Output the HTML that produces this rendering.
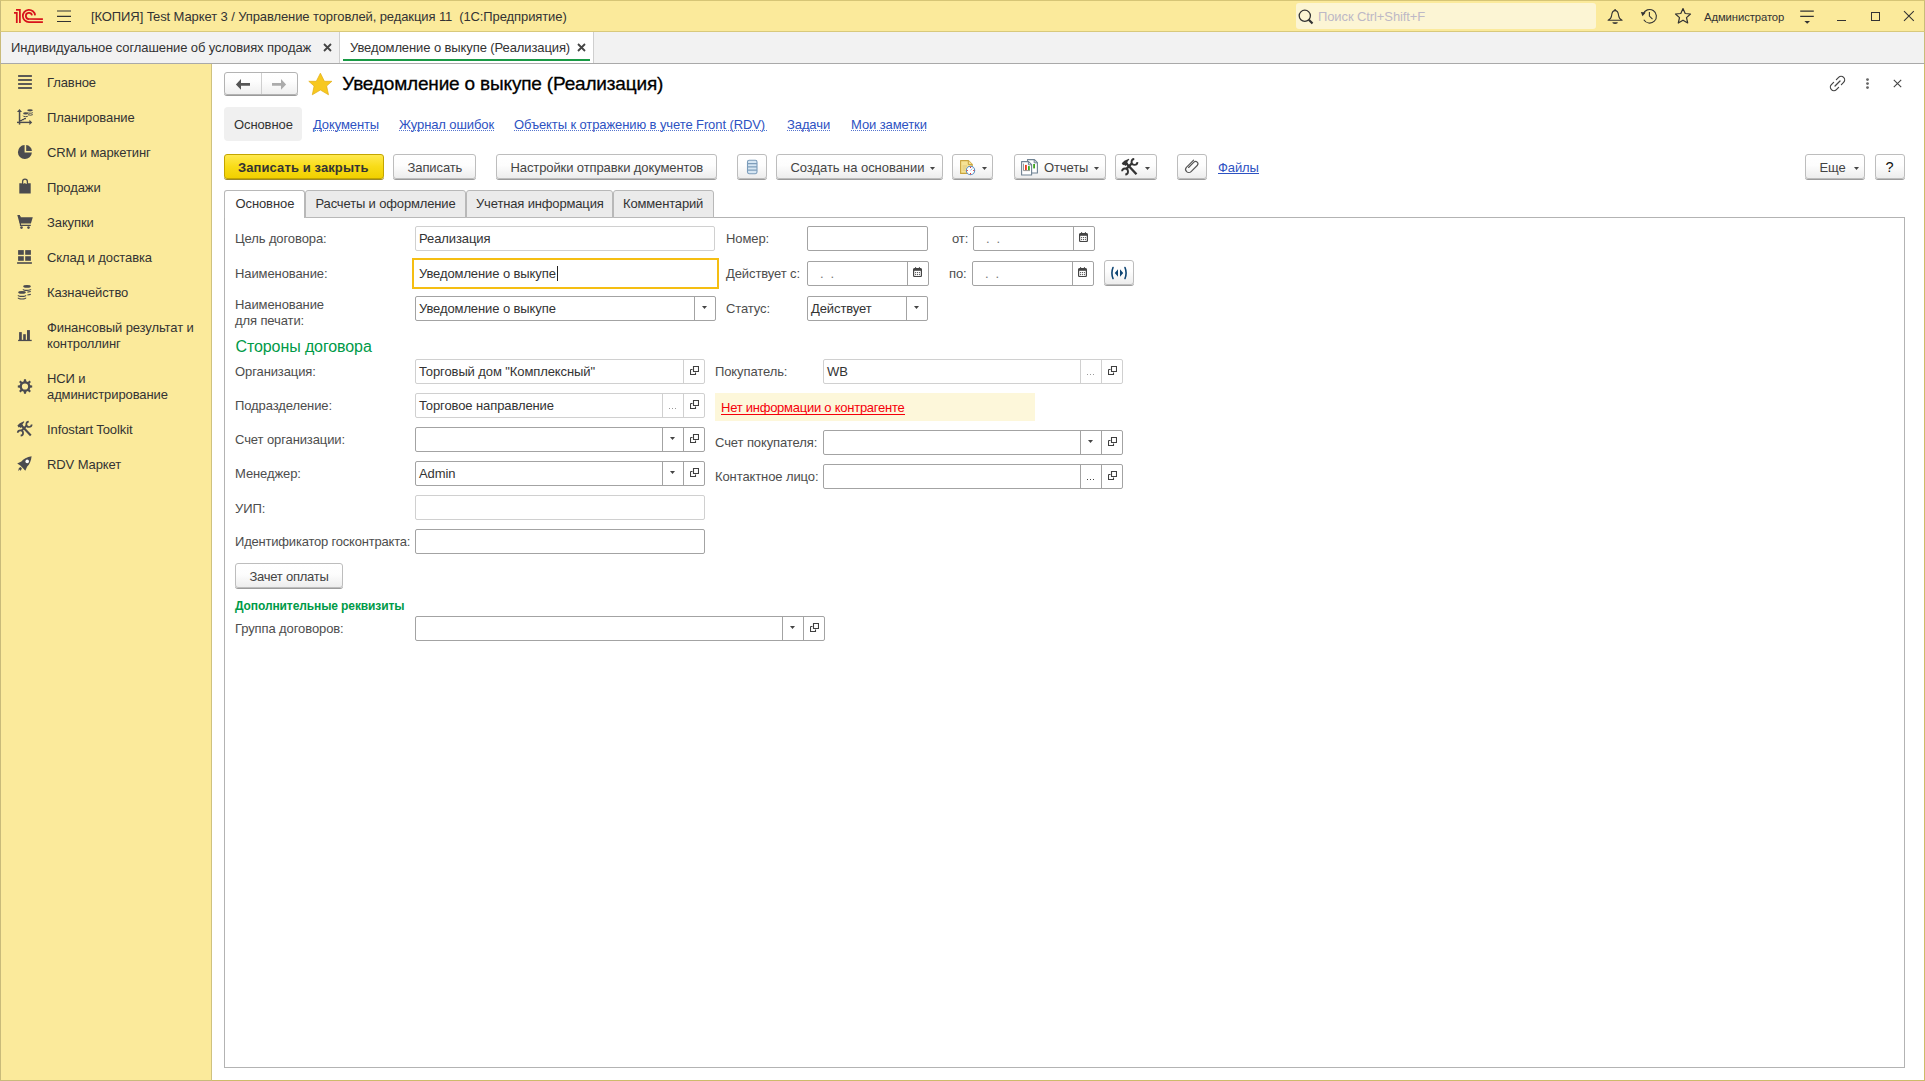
<!DOCTYPE html>
<html><head><meta charset="utf-8">
<style>
*{margin:0;padding:0;box-sizing:border-box}
html,body{width:1925px;height:1081px;overflow:hidden;background:#fff;font-family:"Liberation Sans",sans-serif;font-size:13px;color:#333}
.a{position:absolute}
.t{position:absolute;white-space:pre;line-height:15px;font-size:13px;letter-spacing:-0.1px}
#titlebar{left:0;top:0;width:1925px;height:32px;background:#FBEA9B;border-top:1px solid #D6C576;border-left:1px solid #C9BB7A;border-right:1px solid #C9BB7A;border-bottom:1px solid #D8C97C}
#tabbar{left:0;top:32px;width:1925px;height:32px;background:#F2F2F2;border-bottom:1px solid #A9A9A9;border-left:1px solid #C9BB7A;border-right:1px solid #C9BB7A}
#sidebar{left:0;top:64px;width:212px;height:1017px;background:#FBEA9B;border-right:1px solid #CFC27F;border-left:1px solid #C9BB7A;border-bottom:1px solid #C9BB7A}
#main{left:212px;top:64px;width:1713px;height:1017px;background:#fff;border-right:1px solid #CDBB6A;border-bottom:1px solid #CDBB6A}
.side{color:#333;left:47px}
.btn{position:absolute;height:26px;border:1px solid #B9B9B9;border-bottom-color:#9A9A9A;border-radius:3px;background:linear-gradient(#FFFFFF,#EFEFEF);box-shadow:0 1px 1px rgba(0,0,0,.18)}
.lnk{color:#3C5EC5;border-bottom:1px dotted #3C5EC5;line-height:13px}
.lbl{color:#4D4D4D}
.inp{position:absolute;height:25px;border:1px solid #A9A9A9;border-radius:3px;background:#fff}
.inp.lt{border-color:#D3D3D3}
.dv{position:absolute;top:0;bottom:0;width:1px;background:#C8C8C8}
.tri{position:absolute;width:0;height:0;border-left:3px solid transparent;border-right:3px solid transparent;border-top:3px solid #555}
.ptab{position:absolute;top:190px;height:28px;background:#EBEBEB;border:1px solid #B5B5B5;border-bottom:none;border-radius:3px 3px 0 0}
</style></head><body>

<div id="titlebar" class="a"></div>
<div id="tabbar" class="a"></div>
<div id="sidebar" class="a"></div>
<div id="main" class="a"></div>

<!-- title bar content -->
<svg class="a" style="left:0;top:0" width="50" height="30" viewBox="0 0 50 30">
 <g fill="none" stroke="#D7131B" stroke-width="1.75">
  <path d="M14 12.9 H16.8 V22.9"/>
  <path d="M16 9.85 H19.9 V22.9"/>
  <path d="M35.1 15.3 A6.15 6.15 0 1 0 29.05 22.1 H42.9"/>
  <path d="M32.0 15.3 A3.1 3.1 0 1 0 29.0 19.0 H42.9"/>
 </g>
</svg>
<svg class="a" style="left:57px;top:10px" width="15" height="13"><g stroke="#333" stroke-width="1.2"><path d="M0 1H14M0 6.3H14M0 11.5H14"/></g></svg>
<div class="t" style="left:91px;top:9px;color:#333">[КОПИЯ] Test Маркет 3 / Управление торговлей, редакция 11  (1С:Предприятие)</div>

<div class="a" style="left:1296px;top:3px;width:300px;height:26px;background:#FCF5D4;border-radius:3px"></div>
<svg class="a" style="left:1298px;top:9px" width="17" height="16"><circle cx="6.8" cy="6.8" r="5.6" fill="none" stroke="#333" stroke-width="1.3"/><path d="M10.8 10.8 L14.5 14.5" stroke="#333" stroke-width="2.2"/></svg>
<div class="t" style="left:1318px;top:9px;color:#BDB8C6">Поиск Ctrl+Shift+F</div>

<!-- bell -->
<svg class="a" style="left:1606px;top:8px" width="18" height="18" viewBox="0 0 18 18"><circle cx="9.1" cy="1.9" r="0.9" fill="#333"/><path d="M9.1 2.6 C6.3 2.6 5.9 4.6 5.6 7.5 C5.3 10.2 4.6 11.2 2.1 12.2 H16.1 C13.6 11.2 12.9 10.2 12.6 7.5 C12.3 4.6 11.9 2.6 9.1 2.6 Z" fill="none" stroke="#333" stroke-width="1.1" stroke-linejoin="round"/><path d="M6.3 14.3 A2.8 1.7 0 0 0 11.9 14.3 Z" fill="#333"/></svg>
<!-- history -->
<svg class="a" style="left:1640px;top:8px" width="18" height="18" viewBox="0 0 18 18"><path d="M3.17 6.09 A6.8 6.8 0 1 1 3.77 11.8" fill="none" stroke="#333" stroke-width="1.1"/><path d="M0.9 4.1 L5.7 4.6 L2.5 8.3 Z" fill="#333"/><path d="M9.4 4.1 V8.1 L12.5 11.2" fill="none" stroke="#333" stroke-width="1.1"/></svg>
<!-- star outline -->
<svg class="a" style="left:1674px;top:7px" width="18" height="18" viewBox="0 0 18 18"><path d="M9 1.5 L11.2 6.5 L16.5 7 L12.5 10.6 L13.7 16 L9 13.2 L4.3 16 L5.5 10.6 L1.5 7 L6.8 6.5Z" fill="none" stroke="#333" stroke-width="1.2" stroke-linejoin="round"/></svg>
<div class="t" style="left:1704px;top:9.5px;font-size:11.3px;color:#333">Администратор</div>
<svg class="a" style="left:1799px;top:9px" width="16" height="16"><path d="M1.2 2.1H14.8M1.2 7.4H14.8" stroke="#333" stroke-width="1.1"/><path d="M5.4 11.9H11L8.2 14.7Z" fill="#333"/></svg>
<div class="a" style="left:1837px;top:19.8px;width:9.2px;height:1.2px;background:#333"></div>
<div class="a" style="left:1871px;top:12px;width:9px;height:9px;border:1.3px solid #333"></div>
<svg class="a" style="left:1903px;top:10px" width="12" height="12"><path d="M1 1.1L10.8 10.9M10.8 1.1L1 10.9" stroke="#333" stroke-width="1.05"/></svg>

<!-- open tabs -->
<div class="t" style="left:11px;top:40px;color:#333">Индивидуальное соглашение об условиях продаж</div>
<svg class="a" style="left:323px;top:43px" width="9" height="9"><path d="M1 1L8 8M8 1L1 8" stroke="#444" stroke-width="1.8"/></svg>
<div class="a" style="left:339px;top:32px;width:1px;height:31px;background:#CFCFCF"></div>
<div class="a" style="left:340px;top:32px;width:253px;height:31px;background:#fff"></div>
<div class="a" style="left:593px;top:32px;width:1px;height:31px;background:#CFCFCF"></div>
<div class="a" style="left:343px;top:59px;width:247px;height:2px;background:#199A45"></div>
<div class="t" style="left:350px;top:40px;color:#333;letter-spacing:-0.1px">Уведомление о выкупе (Реализация)</div>
<svg class="a" style="left:577px;top:43px" width="9" height="9"><path d="M1 1L8 8M8 1L1 8" stroke="#444" stroke-width="1.8"/></svg>

<!-- sidebar -->
<svg class="a" style="left:0;top:64px" width="40" height="420" viewBox="0 64 40 420">
 <g fill="#4B4B4F" stroke="none">
  <!-- Главное -->
  <rect x="18.1" y="75.1" width="13.8" height="1.8"/><rect x="18.1" y="79.1" width="13.8" height="1.8"/><rect x="18.1" y="83.1" width="13.8" height="1.8"/><rect x="18.1" y="87.1" width="13.8" height="1.8"/>
  <!-- Планирование -->
  <path d="M19.5 109 L22 112 H17 Z"/><rect x="18.8" y="111" width="1.5" height="13.6"/>
  <rect x="17" y="121.7" width="13" height="1.4"/><path d="M32.2 122.4 L29.4 119.8 V125 Z"/>
  <path d="M19.8 120.6 H21.4 L22.4 119.6 H23.4 L24.4 118.6 H26" fill="none" stroke="#4B4B4F" stroke-width="1.1"/>
  <ellipse cx="25.6" cy="113.4" rx="2.5" ry="1.1"/><path d="M23.1 115.7 A2.5 1 0 0 0 28.1 115.7" fill="none" stroke="#4B4B4F" stroke-width="1"/>
  <ellipse cx="30" cy="110.3" rx="2.8" ry="1.1"/><path d="M27.6 112.6 A2.8 1 0 0 0 32.8 112.6 M28.1 114.6 A2.8 1 0 0 0 32.8 114.6" fill="none" stroke="#4B4B4F" stroke-width="1"/>
  <!-- CRM -->
  <path d="M24.6 152.6 V145.1 A7 7 0 1 0 31.9 152.6 Z"/>
  <path d="M26.2 150.9 V145.1 A6 6 0 0 1 31.9 150.9 Z"/>
  <!-- Продажи -->
  <path d="M19.3 183.2 H21.6 A1.3 1.3 0 0 0 24 183.2 H25.3 A1.3 1.3 0 0 0 27.7 183.2 H30.7 V193.6 H19.3 Z"/>
  <path d="M22.6 184.6 V181.6 A2.4 2.4 0 0 1 27.4 181.6 V184.6" fill="none" stroke="#4B4B4F" stroke-width="1.3"/>
  <!-- Закупки -->
  <path d="M17.3 215 H19.9 L20.2 217.2 H32.8 L30.9 223.6 H19.6 Z"/>
  <path d="M19.9 216 L20.5 225.4 H30.8" fill="none" stroke="#4B4B4F" stroke-width="1.2"/>
  <circle cx="21.5" cy="227.6" r="1.3"/><circle cx="28.5" cy="227.6" r="1.3"/>
  <!-- Склад -->
  <rect x="18.1" y="250.1" width="5.7" height="4.7"/><rect x="25.2" y="250.1" width="5.7" height="4.7"/>
  <rect x="18.1" y="256.2" width="5.7" height="4.6"/><rect x="25.2" y="256.2" width="5.7" height="4.6"/>
  <rect x="17.1" y="262.2" width="14.8" height="1.6"/>
  <!-- Казначейство -->
  <ellipse cx="27" cy="286.4" rx="3.8" ry="1.3"/>
  <path d="M23.2 289.2 A3.8 1.2 0 0 0 30.8 289.2" fill="none" stroke="#4B4B4F" stroke-width="1.2"/>
  <path d="M27.4 292.1 L30.8 291.5 M27.4 295 L30.8 294.3" fill="none" stroke="#4B4B4F" stroke-width="1.2"/>
  <ellipse cx="22" cy="292.4" rx="3.8" ry="1.3"/>
  <path d="M18.2 295.2 A3.8 1.2 0 0 0 25.8 295.2 M18.2 297.8 A3.8 1.2 0 0 0 25.8 297.8" fill="none" stroke="#4B4B4F" stroke-width="1.2"/>
  <!-- Финансовый -->
  <rect x="19.1" y="332.1" width="2.7" height="8"/><rect x="23.2" y="334.2" width="2.6" height="6"/><rect x="27" y="330.1" width="2.9" height="10"/>
  <rect x="18.1" y="339.8" width="13.6" height="1.3"/>
  <!-- НСИ gear -->
  <path fill-rule="evenodd" d="M24 379.2 H26 L26.3 381.2 L27.9 381.9 L29.5 380.6 L30.9 382 L29.6 383.6 L30.3 385.2 L32.2 385.5 V387.5 L30.3 387.8 L29.6 389.4 L30.9 391 L29.5 392.4 L27.9 391.1 L26.3 391.8 L26 393.8 H24 L23.7 391.8 L22.1 391.1 L20.5 392.4 L19.1 391 L20.4 389.4 L19.7 387.8 L17.8 387.5 V385.5 L19.7 385.2 L20.4 383.6 L19.1 382 L20.5 380.6 L22.1 381.9 L23.7 381.2 Z M25 383.4 A3.1 3.1 0 1 0 25 389.6 A3.1 3.1 0 1 0 25 383.4 Z"/>
  <!-- Infostart tools -->
  <g transform="translate(14 418)"><path d="M7.2 7.2 L16.8 17.5" stroke="#4B4B4F" stroke-width="2.1" fill="none"/><path d="M3.4 7.6 L5.8 5.2 L9.9 3.3 L10.3 3.9 L8.3 6.6 L9.1 7.5 L6.8 9.9 L5.5 8.9 L4.6 9.4 Z" fill="#4B4B4F"/><path d="M12.6 7.6 L7.6 12.6" stroke="#4B4B4F" stroke-width="2" fill="none"/><path d="M17.69 6.54 A2.7 2.7 0 1 1 14.76 3.61" stroke="#4B4B4F" stroke-width="1.7" fill="none"/><path d="M3.71 14.76 A2.7 2.7 0 1 1 6.64 17.69" stroke="#4B4B4F" stroke-width="1.7" fill="none"/></g>
  <!-- RDV rocket -->
  <path d="M31.6 456.2 C27 457 23.2 459 21.4 461.4 L17.2 463.5 L20.3 465.6 L23 468.3 L25.3 470.8 L27.2 466.6 C29.6 464.4 31.1 460.5 31.6 456.2 Z"/>
  <circle cx="27.2" cy="461.4" r="1.8" fill="#fff"/>
  <path d="M18.2 471 L18.9 468 L20.7 467 L21.9 468.4 L20.6 470.9 L19.9 469.4 Z"/>
 </g>
</svg>
<div class="t side" style="top:75px">Главное</div>
<div class="t side" style="top:110px">Планирование</div>
<div class="t side" style="top:145px">CRM и маркетинг</div>
<div class="t side" style="top:180px">Продажи</div>
<div class="t side" style="top:215px">Закупки</div>
<div class="t side" style="top:250px">Склад и доставка</div>
<div class="t side" style="top:285px">Казначейство</div>
<div class="t side" style="top:319.5px;line-height:16px">Финансовый результат и
контроллинг</div>
<div class="t side" style="top:370.5px;line-height:16px">НСИ и
администрирование</div>
<div class="t side" style="top:421.5px">Infostart Toolkit</div>
<div class="t side" style="top:456.5px">RDV Маркет</div>

<!-- MAIN -->
<div class="a" style="left:224px;top:72px;width:74px;height:23px;border:1px solid #B3B3B3;border-radius:3px;background:linear-gradient(#FFFFFF 0%,#FDFDFD 40%,#EFEFEF 100%);box-shadow:0 1px 0 #9A9A9A"></div>
<div class="a" style="left:261px;top:73px;width:1px;height:21px;background:#CFCFCF"></div>
<svg class="a" style="left:235px;top:78px" width="16" height="13" viewBox="0 0 16 13"><path d="M0.9 6.4 L6 1.1 V5 H15 V7.8 H6 V11.7 Z" fill="#555"/></svg>
<svg class="a" style="left:271px;top:78px" width="16" height="13" viewBox="0 0 16 13"><path d="M15.1 6.4 L10 1.1 V5 H1 V7.8 H10 V11.7 Z" fill="#ABABAB"/></svg>
<svg class="a" style="left:308px;top:72px" width="25" height="24" viewBox="0 0 25 24"><path d="M12.4 1.2 L16.4 9.3 L23.9 9.3 L18.6 14 L20.5 22.8 L12.4 18 L4.3 22.8 L6.1 14 L0.8 9.3 L8.3 9.3 Z" fill="#F7C81F" stroke="#E3AE12" stroke-width="0.7" stroke-linejoin="round"/></svg>
<div class="t" style="left:342.3px;top:73.42px;font-size:19px;line-height:22px;color:#000;letter-spacing:-0.17px;-webkit-text-stroke:0.3px #000">Уведомление о выкупе (Реализация)</div>
<svg class="a" style="left:1829px;top:75px" width="17" height="17" viewBox="0 0 17 17"><g fill="none" stroke="#444" stroke-width="1.2" stroke-linecap="round"><path d="M7.4 4.6 L9.6 2.4 A2.6 2.6 0 0 1 14.6 7.4 L12.4 9.6"/><path d="M9.6 12.4 L7.4 14.6 A2.6 2.6 0 0 1 2.4 9.6 L4.6 7.4"/><path d="M6 11 L11 6"/></g></svg>
<svg class="a" style="left:1865px;top:78px" width="5" height="12" viewBox="0 0 5 12"><g fill="#666"><circle cx="2.5" cy="1.6" r="1.4"/><circle cx="2.5" cy="5.6" r="1.4"/><circle cx="2.5" cy="9.6" r="1.4"/></g></svg>
<svg class="a" style="left:1893px;top:79px" width="9" height="9" viewBox="0 0 9 9"><path d="M0.8 0.8L8.2 8.2M8.2 0.8L0.8 8.2" stroke="#444" stroke-width="1.1"/></svg>
<div class="a" style="left:224px;top:107px;width:78px;height:34px;background:#F0F0F0;border-radius:4px"></div>
<div class="t" style="left:234px;top:117.00px;font-size:13px;line-height:15px;color:#333">Основное</div>
<div class="t" style="left:313px;top:117.00px;font-size:13px;line-height:15px;color:#2D52C2">Документы</div>
<div class="a" style="left:313px;top:130px;width:65.5px;height:1px;background:repeating-linear-gradient(90deg,#5574CE 0 1px,transparent 1px 2px)"></div>
<div class="t" style="left:399px;top:117.00px;font-size:13px;line-height:15px;color:#2D52C2">Журнал ошибок</div>
<div class="a" style="left:399px;top:130px;width:95px;height:1px;background:repeating-linear-gradient(90deg,#5574CE 0 1px,transparent 1px 2px)"></div>
<div class="t" style="left:514px;top:117.00px;font-size:13px;line-height:15px;color:#2D52C2">Объекты к отражению в учете Front (RDV)</div>
<div class="a" style="left:514px;top:130px;width:253px;height:1px;background:repeating-linear-gradient(90deg,#5574CE 0 1px,transparent 1px 2px)"></div>
<div class="t" style="left:787px;top:117.00px;font-size:13px;line-height:15px;color:#2D52C2">Задачи</div>
<div class="a" style="left:787px;top:130px;width:43px;height:1px;background:repeating-linear-gradient(90deg,#5574CE 0 1px,transparent 1px 2px)"></div>
<div class="t" style="left:851px;top:117.00px;font-size:13px;line-height:15px;color:#2D52C2">Мои заметки</div>
<div class="a" style="left:851px;top:130px;width:75.5px;height:1px;background:repeating-linear-gradient(90deg,#5574CE 0 1px,transparent 1px 2px)"></div>
<div class="a" style="left:224px;top:154px;width:160px;height:25px;border:1px solid #C3A500;border-radius:3px;background:linear-gradient(#FFE94F 0%,#F8DC18 50%,#F1D000 100%);box-shadow:0 1px 0 #9C8A2A"></div>
<div class="t" style="left:238px;top:160.00px;font-size:13px;line-height:15px;color:#333;font-weight:bold;letter-spacing:0.1px">Записать и закрыть</div>
<div class="a" style="left:393px;top:154px;width:83px;height:25px;border:1px solid #BDBDBD;border-radius:3px;background:linear-gradient(#FFFFFF 0%,#FDFDFD 45%,#EDEDED 100%);box-shadow:0 1px 0 #9C9C9C"></div>
<div class="t" style="left:407.5px;top:160.00px;font-size:13px;line-height:15px;color:#444">Записать</div>
<div class="a" style="left:496px;top:154px;width:221px;height:25px;border:1px solid #BDBDBD;border-radius:3px;background:linear-gradient(#FFFFFF 0%,#FDFDFD 45%,#EDEDED 100%);box-shadow:0 1px 0 #9C9C9C"></div>
<div class="t" style="left:510.5px;top:160.00px;font-size:13px;line-height:15px;color:#444;letter-spacing:-0.1px">Настройки отправки документов</div>
<div class="a" style="left:737px;top:154px;width:30px;height:25px;border:1px solid #BDBDBD;border-radius:3px;background:linear-gradient(#FFFFFF 0%,#FDFDFD 45%,#EDEDED 100%);box-shadow:0 1px 0 #9C9C9C"></div>
<svg class="a" style="left:746px;top:159px" width="12" height="16" viewBox="0 0 12 16"><rect x="1.5" y="1.3" width="9.5" height="13.4" rx="1.6" fill="#D6E6F3" stroke="#7B9CBA" stroke-width="1.1"/><g stroke="#7E9DBA" stroke-width="1.2"><path d="M1.5 4.6H11M1.5 7.9H11M1.5 11.2H11"/></g></svg>
<div class="a" style="left:776px;top:154px;width:167px;height:25px;border:1px solid #BDBDBD;border-radius:3px;background:linear-gradient(#FFFFFF 0%,#FDFDFD 45%,#EDEDED 100%);box-shadow:0 1px 0 #9C9C9C"></div>
<div class="t" style="left:790.5px;top:160.00px;font-size:13px;line-height:15px;color:#444;letter-spacing:-0.05px">Создать на основании</div>
<svg class="a" style="left:930.0px;top:166.5px" width="5" height="3" viewBox="0 0 5 3"><path d="M0 0H5L2.5 3Z" fill="#444"/></svg>
<div class="a" style="left:952px;top:154px;width:41px;height:25px;border:1px solid #BDBDBD;border-radius:3px;background:linear-gradient(#FFFFFF 0%,#FDFDFD 45%,#EDEDED 100%);box-shadow:0 1px 0 #9C9C9C"></div>
<svg class="a" style="left:959px;top:159px" width="18" height="17" viewBox="0 0 18 17"><path d="M1.6 1.6 H9.5 L13.2 5.3 V14.4 H1.6 Z" fill="#F6E394" stroke="#C9A43E" stroke-width="1.1" stroke-linejoin="round"/><path d="M9.3 1.6 V5.5 H13.2" fill="#F6E394" stroke="#C9A43E" stroke-width="1"/><g stroke="#D9C47A" stroke-width="0.9"><path d="M3.5 7H8M3.5 9H7M3.5 11H6"/></g><circle cx="11.5" cy="11.5" r="4.2" fill="#fff" stroke="#5A8CC0" stroke-width="1.1"/><g fill="#E01010"><circle cx="11.5" cy="8.3" r="0.6"/><circle cx="11.5" cy="14.7" r="0.6"/><circle cx="8.3" cy="11.5" r="0.6"/><circle cx="14.7" cy="11.5" r="0.6"/></g><path d="M11.5 11.5 L13.2 9.6" stroke="#8FB0DA" stroke-width="0.9"/></svg>
<svg class="a" style="left:981.5px;top:166.5px" width="5" height="3" viewBox="0 0 5 3"><path d="M0 0H5L2.5 3Z" fill="#444"/></svg>
<div class="a" style="left:1014px;top:154px;width:92px;height:25px;border:1px solid #BDBDBD;border-radius:3px;background:linear-gradient(#FFFFFF 0%,#FDFDFD 45%,#EDEDED 100%);box-shadow:0 1px 0 #9C9C9C"></div>
<svg class="a" style="left:1020px;top:158px" width="19" height="18" viewBox="0 0 19 18"><path d="M7.5 1.6 H14.4 L17.4 4.6 V15 H7.5 Z" fill="#fff" stroke="#6F8293" stroke-width="1.1" stroke-linejoin="round"/><path d="M14.2 1.6V4.8H17.4" fill="none" stroke="#6F8293" stroke-width="1"/><path d="M1.6 3.6 H8.6 L11.6 6.6 V17 H1.6 Z" fill="#fff" stroke="#6F8293" stroke-width="1.1" stroke-linejoin="round"/><path d="M8.4 3.6V6.8H11.6" fill="none" stroke="#6F8293" stroke-width="1"/><path d="M3.5 5.6V12.6H10" fill="none" stroke="#8A8A8A" stroke-width="0.9"/><rect x="5" y="6.9" width="1.8" height="5.2" fill="#E83A1E"/><rect x="8" y="8.1" width="1.8" height="4" fill="#3EA31C"/><rect x="13.2" y="6" width="1.8" height="4.4" fill="#3EA31C"/></svg>
<div class="t" style="left:1044px;top:160.00px;font-size:13px;line-height:15px;color:#444">Отчеты</div>
<svg class="a" style="left:1093.5px;top:166.5px" width="5" height="3" viewBox="0 0 5 3"><path d="M0 0H5L2.5 3Z" fill="#444"/></svg>
<div class="a" style="left:1115px;top:154px;width:42px;height:25px;border:1px solid #BDBDBD;border-radius:3px;background:linear-gradient(#FFFFFF 0%,#FDFDFD 45%,#EDEDED 100%);box-shadow:0 1px 0 #9C9C9C"></div>
<svg class="a" style="left:1118px;top:155px" width="25" height="25" viewBox="0 0 25 25"><g transform="scale(1.1)"><path d="M7.2 7.2 L16.8 17.5" stroke="#333" stroke-width="2.1" fill="none"/><path d="M3.4 7.6 L5.8 5.2 L9.9 3.3 L10.3 3.9 L8.3 6.6 L9.1 7.5 L6.8 9.9 L5.5 8.9 L4.6 9.4 Z" fill="#333"/><path d="M12.6 7.6 L7.6 12.6" stroke="#333" stroke-width="2" fill="none"/><path d="M17.69 6.54 A2.7 2.7 0 1 1 14.76 3.61" stroke="#333" stroke-width="1.7" fill="none"/><path d="M3.71 14.76 A2.7 2.7 0 1 1 6.64 17.69" stroke="#333" stroke-width="1.7" fill="none"/></g></svg>
<svg class="a" style="left:1144.5px;top:166.5px" width="5" height="3" viewBox="0 0 5 3"><path d="M0 0H5L2.5 3Z" fill="#444"/></svg>
<div class="a" style="left:1177px;top:154px;width:30px;height:25px;border:1px solid #BDBDBD;border-radius:3px;background:linear-gradient(#FFFFFF 0%,#FDFDFD 45%,#EDEDED 100%);box-shadow:0 1px 0 #9C9C9C"></div>
<svg class="a" style="left:1180px;top:155px" width="25" height="25" viewBox="0 0 25 25"><path d="M13.6 5.1 L6.6 12.1 A3.18 3.18 0 0 0 11.1 16.6 L17.2 10.5 A2.33 2.33 0 0 0 13.9 7.2 L8.6 12.5" fill="none" stroke="#555" stroke-width="1.15" stroke-linecap="round"/></svg>
<div class="t" style="left:1218px;top:160.00px;font-size:13px;line-height:15px;color:#2D52C2">Файлы</div>
<div class="a" style="left:1218px;top:173px;width:41px;height:1px;background:#2D52C2"></div>
<div class="a" style="left:1805px;top:154px;width:60px;height:25px;border:1px solid #BDBDBD;border-radius:3px;background:linear-gradient(#FFFFFF 0%,#FDFDFD 45%,#EDEDED 100%);box-shadow:0 1px 0 #9C9C9C"></div>
<div class="t" style="left:1819.5px;top:160.00px;font-size:13px;line-height:15px;color:#444">Еще</div>
<svg class="a" style="left:1853.5px;top:166.5px" width="5" height="3" viewBox="0 0 5 3"><path d="M0 0H5L2.5 3Z" fill="#444"/></svg>
<div class="a" style="left:1875px;top:154px;width:30px;height:25px;border:1px solid #BDBDBD;border-radius:3px;background:linear-gradient(#FFFFFF 0%,#FDFDFD 45%,#EDEDED 100%);box-shadow:0 1px 0 #9C9C9C"></div>
<div class="t" style="left:1885.5px;top:159.98px;font-size:14.5px;line-height:15px;color:#111">?</div>
<div class="a" style="left:224px;top:217px;width:1681px;height:851px;border:1px solid #B3B3B3;border-top-color:#B3B3B3;background:#fff"></div>
<div class="a" style="left:304.5px;top:190px;width:161.0px;height:28px;background:#EBEBEB;border:1px solid #B8B8B8;border-radius:3px 3px 0 0"></div>
<div class="t" style="left:315.5px;top:195.60px;font-size:13px;line-height:15px;color:#333;letter-spacing:-0.15px">Расчеты и оформление</div>
<div class="a" style="left:465.5px;top:190px;width:147.0px;height:28px;background:#EBEBEB;border:1px solid #B8B8B8;border-radius:3px 3px 0 0"></div>
<div class="t" style="left:476px;top:195.60px;font-size:13px;line-height:15px;color:#333;letter-spacing:-0.15px">Учетная информация</div>
<div class="a" style="left:612.5px;top:190px;width:101.5px;height:28px;background:#EBEBEB;border:1px solid #B8B8B8;border-radius:3px 3px 0 0"></div>
<div class="t" style="left:623px;top:195.60px;font-size:13px;line-height:15px;color:#333;letter-spacing:-0.15px">Комментарий</div>
<div class="a" style="left:224px;top:190px;width:81px;height:28px;background:#fff;border:1px solid #B8B8B8;border-bottom:none;border-radius:3px 3px 0 0"></div>
<div class="t" style="left:235.5px;top:195.60px;font-size:13px;line-height:15px;color:#333">Основное</div>
<div class="t" style="left:235px;top:231.00px;font-size:13px;line-height:15px;color:#4D4D4D">Цель договора:</div>
<div class="a" style="left:415px;top:226px;width:300px;height:25px;border:1px solid #D0D0D0;border-radius:2px;background:#fff"></div>
<div class="t" style="left:419px;top:231.20px;font-size:13px;line-height:15px;color:#333">Реализация</div>
<div class="t" style="left:726px;top:231.00px;font-size:13px;line-height:15px;color:#4D4D4D">Номер:</div>
<div class="a" style="left:807px;top:226px;width:121px;height:25px;border:1px solid #A3A3A3;border-radius:2px;background:#fff"></div>
<div class="t" style="left:952px;top:231.00px;font-size:13px;line-height:15px;color:#4D4D4D">от:</div>
<div class="a" style="left:973px;top:226px;width:122px;height:25px;border:1px solid #A3A3A3;border-radius:2px;background:#fff"></div>
<div class="a" style="left:1073px;top:227px;width:1px;height:23px;background:#A3A3A3"></div>
<svg class="a" style="left:1078.8px;top:232.2px" width="9" height="10" viewBox="0 0 9 10"><rect x="0.6" y="1.6" width="7.8" height="8" rx="1" fill="#fff" stroke="#444" stroke-width="1.2"/><rect x="0.6" y="1.6" width="7.8" height="2.2" fill="#444"/><g fill="#444"><circle cx="2.6" cy="5.6" r="0.6"/><circle cx="4.5" cy="5.6" r="0.6"/><circle cx="6.4" cy="5.6" r="0.6"/><circle cx="2.6" cy="7.6" r="0.6"/><circle cx="4.5" cy="7.6" r="0.6"/><circle cx="6.4" cy="7.6" r="0.6"/></g><rect x="2" y="0.2" width="1.1" height="1.6" fill="#444"/><rect x="5.9" y="0.2" width="1.1" height="1.6" fill="#444"/></svg>
<div class="t" style="left:986px;top:231.00px;font-size:13px;line-height:15px;color:#777">.  .</div>
<div class="t" style="left:235px;top:266.00px;font-size:13px;line-height:15px;color:#4D4D4D">Наименование:</div>
<div class="a" style="left:412px;top:258px;width:307px;height:31px;border:2px solid #F5BE12;background:#fff"></div>
<div class="t" style="left:419px;top:266.00px;font-size:13px;line-height:15px;color:#333">Уведомление о выкупе</div>
<div class="a" style="left:557px;top:266px;width:1px;height:15px;background:#222"></div>
<div class="t" style="left:726px;top:266.00px;font-size:13px;line-height:15px;color:#4D4D4D">Действует с:</div>
<div class="a" style="left:807px;top:261px;width:122px;height:25px;border:1px solid #A3A3A3;border-radius:2px;background:#fff"></div>
<div class="a" style="left:907px;top:262px;width:1px;height:23px;background:#A3A3A3"></div>
<svg class="a" style="left:912.8px;top:267.2px" width="9" height="10" viewBox="0 0 9 10"><rect x="0.6" y="1.6" width="7.8" height="8" rx="1" fill="#fff" stroke="#444" stroke-width="1.2"/><rect x="0.6" y="1.6" width="7.8" height="2.2" fill="#444"/><g fill="#444"><circle cx="2.6" cy="5.6" r="0.6"/><circle cx="4.5" cy="5.6" r="0.6"/><circle cx="6.4" cy="5.6" r="0.6"/><circle cx="2.6" cy="7.6" r="0.6"/><circle cx="4.5" cy="7.6" r="0.6"/><circle cx="6.4" cy="7.6" r="0.6"/></g><rect x="2" y="0.2" width="1.1" height="1.6" fill="#444"/><rect x="5.9" y="0.2" width="1.1" height="1.6" fill="#444"/></svg>
<div class="t" style="left:820px;top:266.00px;font-size:13px;line-height:15px;color:#777">.  .</div>
<div class="t" style="left:949px;top:266.00px;font-size:13px;line-height:15px;color:#4D4D4D">по:</div>
<div class="a" style="left:972px;top:261px;width:122px;height:25px;border:1px solid #A3A3A3;border-radius:2px;background:#fff"></div>
<div class="a" style="left:1072px;top:262px;width:1px;height:23px;background:#A3A3A3"></div>
<svg class="a" style="left:1077.8px;top:267.2px" width="9" height="10" viewBox="0 0 9 10"><rect x="0.6" y="1.6" width="7.8" height="8" rx="1" fill="#fff" stroke="#444" stroke-width="1.2"/><rect x="0.6" y="1.6" width="7.8" height="2.2" fill="#444"/><g fill="#444"><circle cx="2.6" cy="5.6" r="0.6"/><circle cx="4.5" cy="5.6" r="0.6"/><circle cx="6.4" cy="5.6" r="0.6"/><circle cx="2.6" cy="7.6" r="0.6"/><circle cx="4.5" cy="7.6" r="0.6"/><circle cx="6.4" cy="7.6" r="0.6"/></g><rect x="2" y="0.2" width="1.1" height="1.6" fill="#444"/><rect x="5.9" y="0.2" width="1.1" height="1.6" fill="#444"/></svg>
<div class="t" style="left:985px;top:266.00px;font-size:13px;line-height:15px;color:#777">.  .</div>
<div class="a" style="left:1104px;top:260px;width:30px;height:25px;border:1px solid #BDBDBD;border-radius:3px;background:linear-gradient(#FFFFFF 0%,#FDFDFD 45%,#EDEDED 100%);box-shadow:0 1px 0 #9C9C9C"></div>
<svg class="a" style="left:1110px;top:266px" width="18" height="14" viewBox="0 0 18 14"><g fill="none" stroke="#0E4573" stroke-width="1.6" stroke-linecap="round"><path d="M3 1.5 Q0.8 7 3 12.5"/><path d="M15 1.5 Q17.2 7 15 12.5"/></g><path d="M8 3.2 L4.8 7 L8 10.8Z M10 3.2 L13.2 7 L10 10.8Z" fill="#0E4573"/></svg>
<div class="t" style="left:235px;top:297.20px;font-size:13px;line-height:15px;color:#4D4D4D">Наименование</div>
<div class="t" style="left:235px;top:313.00px;font-size:13px;line-height:15px;color:#4D4D4D">для печати:</div>
<div class="a" style="left:415px;top:296px;width:301px;height:25px;border:1px solid #A3A3A3;border-radius:2px;background:#fff"></div>
<div class="t" style="left:419px;top:301.20px;font-size:13px;line-height:15px;color:#333">Уведомление о выкупе</div>
<div class="a" style="left:694px;top:297px;width:1px;height:23px;background:#A3A3A3"></div>
<svg class="a" style="left:702.0px;top:306.1px" width="5" height="3" viewBox="0 0 5 3"><path d="M0 0H5L2.5 3Z" fill="#444"/></svg>
<div class="t" style="left:726px;top:301.30px;font-size:13px;line-height:15px;color:#4D4D4D">Статус:</div>
<div class="a" style="left:807px;top:296px;width:121px;height:25px;border:1px solid #A3A3A3;border-radius:2px;background:#fff"></div>
<div class="t" style="left:811px;top:301.20px;font-size:13px;line-height:15px;color:#333">Действует</div>
<div class="a" style="left:906px;top:297px;width:1px;height:23px;background:#A3A3A3"></div>
<svg class="a" style="left:914.0px;top:306.1px" width="5" height="3" viewBox="0 0 5 3"><path d="M0 0H5L2.5 3Z" fill="#444"/></svg>
<div class="t" style="left:235.5px;top:336.76px;font-size:16px;line-height:19px;color:#009A48">Стороны договора</div>
<div class="t" style="left:235px;top:364.00px;font-size:13px;line-height:15px;color:#4D4D4D">Организация:</div>
<div class="a" style="left:415px;top:359px;width:290px;height:25px;border:1px solid #D0D0D0;border-radius:2px;background:#fff"></div>
<div class="t" style="left:419px;top:364.20px;font-size:13px;line-height:15px;color:#333">Торговый дом "Комплексный"</div>
<div class="a" style="left:683px;top:360px;width:1px;height:23px;background:#D0D0D0"></div>
<svg class="a" style="left:689.9px;top:366.3px" width="9" height="9" viewBox="0 0 9 9"><path d="M3.5 0.5H8.5V5.5H3.5Z M0.5 3.5H2.5 M0.5 3.5V8.5H5.5V6.5" fill="none" stroke="#3F3F3F" stroke-width="1.1"/></svg>
<div class="t" style="left:235px;top:398.30px;font-size:13px;line-height:15px;color:#4D4D4D">Подразделение:</div>
<div class="a" style="left:415px;top:393px;width:290px;height:25px;border:1px solid #D0D0D0;border-radius:2px;background:#fff"></div>
<div class="t" style="left:419px;top:398.20px;font-size:13px;line-height:15px;color:#333">Торговое направление</div>
<div class="a" style="left:683px;top:394px;width:1px;height:23px;background:#D0D0D0"></div>
<svg class="a" style="left:689.9px;top:400.3px" width="9" height="9" viewBox="0 0 9 9"><path d="M3.5 0.5H8.5V5.5H3.5Z M0.5 3.5H2.5 M0.5 3.5V8.5H5.5V6.5" fill="none" stroke="#3F3F3F" stroke-width="1.1"/></svg>
<div class="a" style="left:662px;top:394px;width:1px;height:23px;background:#D0D0D0"></div>
<svg class="a" style="left:668.5px;top:407.5px" width="9" height="2" viewBox="0 0 9 2"><g fill="#9A9A9A"><rect x="0" y="0" width="1" height="1"/><rect x="3" y="0" width="1" height="1"/><rect x="6" y="0" width="1" height="1"/></g></svg>
<div class="t" style="left:235px;top:431.60px;font-size:13px;line-height:15px;color:#4D4D4D">Счет организации:</div>
<div class="a" style="left:415px;top:427px;width:290px;height:25px;border:1px solid #A3A3A3;border-radius:2px;background:#fff"></div>
<div class="a" style="left:683px;top:428px;width:1px;height:23px;background:#A3A3A3"></div>
<svg class="a" style="left:689.9px;top:434.3px" width="9" height="9" viewBox="0 0 9 9"><path d="M3.5 0.5H8.5V5.5H3.5Z M0.5 3.5H2.5 M0.5 3.5V8.5H5.5V6.5" fill="none" stroke="#3F3F3F" stroke-width="1.1"/></svg>
<div class="a" style="left:662px;top:428px;width:1px;height:23px;background:#A3A3A3"></div>
<svg class="a" style="left:670.0px;top:437.1px" width="5" height="3" viewBox="0 0 5 3"><path d="M0 0H5L2.5 3Z" fill="#444"/></svg>
<div class="t" style="left:235px;top:465.90px;font-size:13px;line-height:15px;color:#4D4D4D">Менеджер:</div>
<div class="a" style="left:415px;top:461px;width:290px;height:25px;border:1px solid #A3A3A3;border-radius:2px;background:#fff"></div>
<div class="t" style="left:419px;top:466.20px;font-size:13px;line-height:15px;color:#333">Admin</div>
<div class="a" style="left:683px;top:462px;width:1px;height:23px;background:#A3A3A3"></div>
<svg class="a" style="left:689.9px;top:468.3px" width="9" height="9" viewBox="0 0 9 9"><path d="M3.5 0.5H8.5V5.5H3.5Z M0.5 3.5H2.5 M0.5 3.5V8.5H5.5V6.5" fill="none" stroke="#3F3F3F" stroke-width="1.1"/></svg>
<div class="a" style="left:662px;top:462px;width:1px;height:23px;background:#A3A3A3"></div>
<svg class="a" style="left:670.0px;top:471.1px" width="5" height="3" viewBox="0 0 5 3"><path d="M0 0H5L2.5 3Z" fill="#444"/></svg>
<div class="t" style="left:235px;top:500.50px;font-size:13px;line-height:15px;color:#4D4D4D">УИП:</div>
<div class="a" style="left:415px;top:495px;width:290px;height:25px;border:1px solid #D0D0D0;border-radius:2px;background:#fff"></div>
<div class="t" style="left:235px;top:534.40px;font-size:13px;line-height:15px;color:#4D4D4D;letter-spacing:-0.2px">Идентификатор госконтракта:</div>
<div class="a" style="left:415px;top:529px;width:290px;height:25px;border:1px solid #A3A3A3;border-radius:2px;background:#fff"></div>
<div class="a" style="left:235px;top:563px;width:108px;height:25px;border:1px solid #BDBDBD;border-radius:3px;background:linear-gradient(#FFFFFF 0%,#FDFDFD 45%,#EDEDED 100%);box-shadow:0 1px 0 #9C9C9C"></div>
<div class="t" style="left:249.5px;top:569.00px;font-size:13px;line-height:15px;color:#444;letter-spacing:-0.25px">Зачет оплаты</div>
<div class="t" style="left:235px;top:598.64px;font-size:12px;line-height:14px;color:#009A48;font-weight:bold">Дополнительные реквизиты</div>
<div class="t" style="left:235px;top:621.30px;font-size:13px;line-height:15px;color:#4D4D4D">Группа договоров:</div>
<div class="a" style="left:415px;top:616px;width:410px;height:25px;border:1px solid #A3A3A3;border-radius:2px;background:#fff"></div>
<div class="a" style="left:803px;top:617px;width:1px;height:23px;background:#A3A3A3"></div>
<svg class="a" style="left:809.9px;top:623.3px" width="9" height="9" viewBox="0 0 9 9"><path d="M3.5 0.5H8.5V5.5H3.5Z M0.5 3.5H2.5 M0.5 3.5V8.5H5.5V6.5" fill="none" stroke="#3F3F3F" stroke-width="1.1"/></svg>
<div class="a" style="left:782px;top:617px;width:1px;height:23px;background:#A3A3A3"></div>
<svg class="a" style="left:790.0px;top:626.1px" width="5" height="3" viewBox="0 0 5 3"><path d="M0 0H5L2.5 3Z" fill="#444"/></svg>
<div class="t" style="left:715px;top:364.30px;font-size:13px;line-height:15px;color:#4D4D4D">Покупатель:</div>
<div class="a" style="left:823px;top:359px;width:300px;height:25px;border:1px solid #D0D0D0;border-radius:2px;background:#fff"></div>
<div class="t" style="left:827px;top:364.20px;font-size:13px;line-height:15px;color:#333">WB</div>
<div class="a" style="left:1101px;top:360px;width:1px;height:23px;background:#D0D0D0"></div>
<svg class="a" style="left:1107.9px;top:366.3px" width="9" height="9" viewBox="0 0 9 9"><path d="M3.5 0.5H8.5V5.5H3.5Z M0.5 3.5H2.5 M0.5 3.5V8.5H5.5V6.5" fill="none" stroke="#3F3F3F" stroke-width="1.1"/></svg>
<div class="a" style="left:1080px;top:360px;width:1px;height:23px;background:#D0D0D0"></div>
<svg class="a" style="left:1086.5px;top:373.5px" width="9" height="2" viewBox="0 0 9 2"><g fill="#9A9A9A"><rect x="0" y="0" width="1" height="1"/><rect x="3" y="0" width="1" height="1"/><rect x="6" y="0" width="1" height="1"/></g></svg>
<div class="a" style="left:715px;top:393px;width:320px;height:28px;background:#FDF7DA"></div>
<div class="t" style="left:721px;top:400.20px;font-size:13px;line-height:15px;color:#F5000A;letter-spacing:-0.25px">Нет информации о контрагенте</div>
<div class="a" style="left:721px;top:413.5px;width:184px;height:1px;background:#F5000A"></div>
<div class="t" style="left:715px;top:435.10px;font-size:13px;line-height:15px;color:#4D4D4D">Счет покупателя:</div>
<div class="a" style="left:823px;top:430px;width:300px;height:25px;border:1px solid #A3A3A3;border-radius:2px;background:#fff"></div>
<div class="a" style="left:1101px;top:431px;width:1px;height:23px;background:#A3A3A3"></div>
<svg class="a" style="left:1107.9px;top:437.3px" width="9" height="9" viewBox="0 0 9 9"><path d="M3.5 0.5H8.5V5.5H3.5Z M0.5 3.5H2.5 M0.5 3.5V8.5H5.5V6.5" fill="none" stroke="#3F3F3F" stroke-width="1.1"/></svg>
<div class="a" style="left:1080px;top:431px;width:1px;height:23px;background:#A3A3A3"></div>
<svg class="a" style="left:1088.0px;top:440.1px" width="5" height="3" viewBox="0 0 5 3"><path d="M0 0H5L2.5 3Z" fill="#444"/></svg>
<div class="t" style="left:715px;top:469.40px;font-size:13px;line-height:15px;color:#4D4D4D">Контактное лицо:</div>
<div class="a" style="left:823px;top:464px;width:300px;height:25px;border:1px solid #A3A3A3;border-radius:2px;background:#fff"></div>
<div class="a" style="left:1101px;top:465px;width:1px;height:23px;background:#A3A3A3"></div>
<svg class="a" style="left:1107.9px;top:471.3px" width="9" height="9" viewBox="0 0 9 9"><path d="M3.5 0.5H8.5V5.5H3.5Z M0.5 3.5H2.5 M0.5 3.5V8.5H5.5V6.5" fill="none" stroke="#3F3F3F" stroke-width="1.1"/></svg>
<div class="a" style="left:1080px;top:465px;width:1px;height:23px;background:#A3A3A3"></div>
<svg class="a" style="left:1086.5px;top:478.5px" width="9" height="2" viewBox="0 0 9 2"><g fill="#444"><rect x="0" y="0" width="1" height="1"/><rect x="3" y="0" width="1" height="1"/><rect x="6" y="0" width="1" height="1"/></g></svg>
<!-- /MAIN -->
</body></html>
